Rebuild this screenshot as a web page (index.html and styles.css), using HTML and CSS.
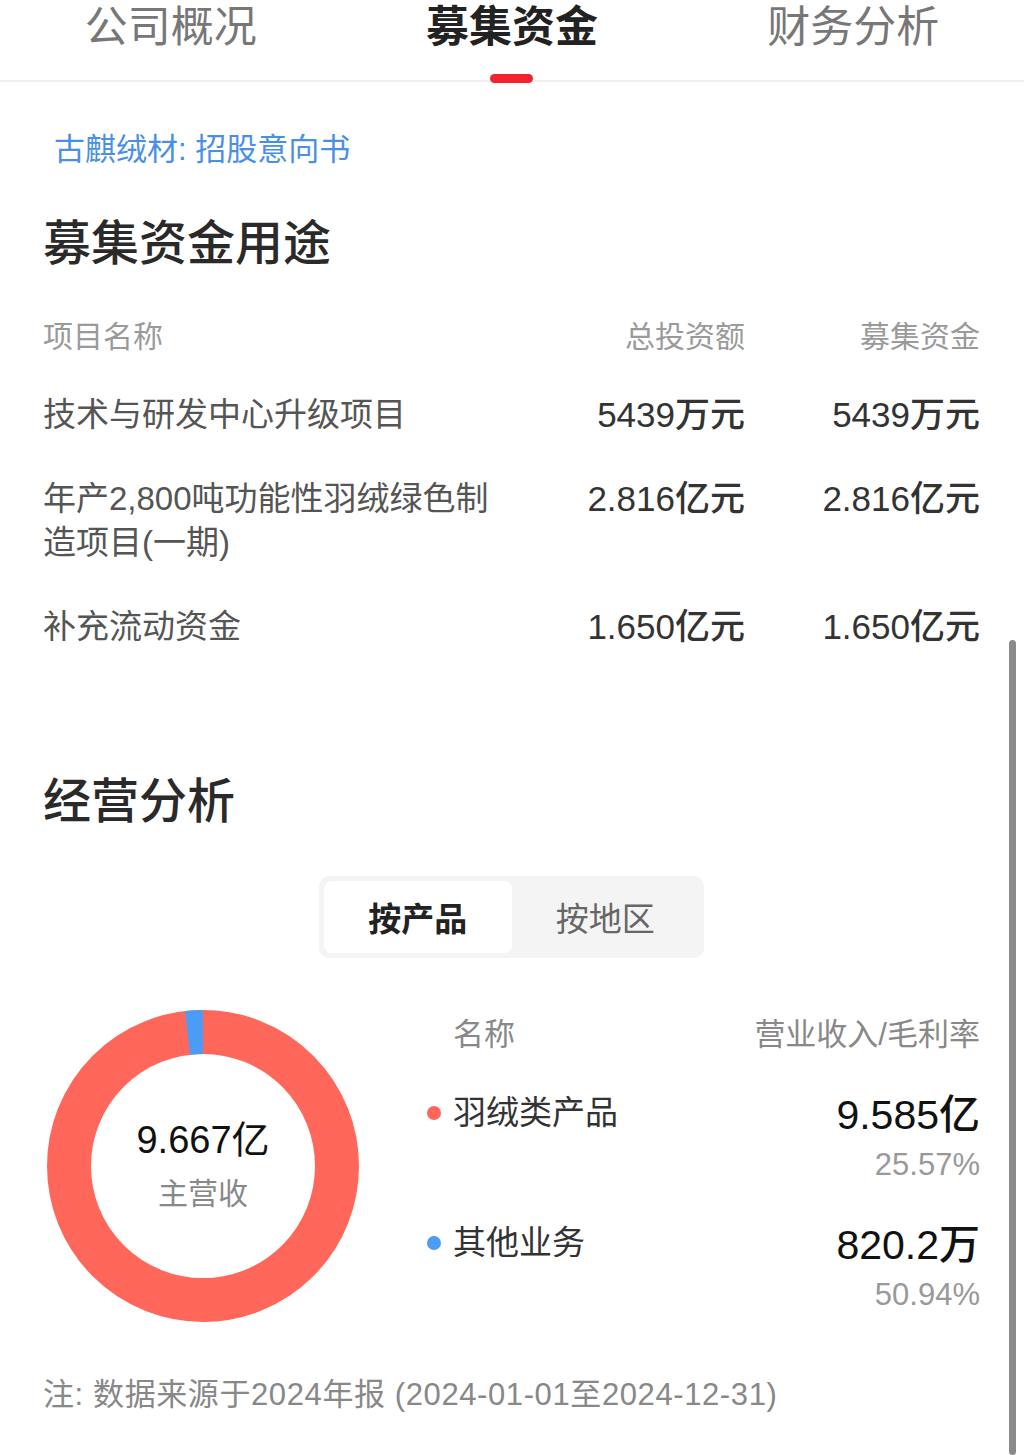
FILE: index.html
```html
<!DOCTYPE html>
<html lang="zh-CN">
  <head>
    <meta charset="UTF-8" />
    <meta name="viewport" content="width=device-width, initial-scale=1.0" />
    <title>募集资金</title>
    <link rel="stylesheet" href="styles.css">
  </head>
  <body>
    <div class="page">
      <nav class="tabs">
        <a class="tab">公司概况</a>
        <a class="tab active">募集资金</a>
        <a class="tab">财务分析</a>
      </nav>

      <div class="content">
        <a class="doc-link">古麒绒材: 招股意向书</a>

        <h2 class="section-title first">募集资金用途</h2>
        <div class="fund-table">
          <div class="fund-row fund-head">
            <span>项目名称</span>
            <span class="num">总投资额</span>
            <span class="num">募集资金</span>
          </div>
          <div class="fund-row">
            <span class="name">技术与研发中心升级项目</span>
            <span class="num val">5439万元</span>
            <span class="num val">5439万元</span>
          </div>
          <div class="fund-row">
            <span class="name">年产2,800吨功能性羽绒绿色制造项目(一期)</span>
            <span class="num val">2.816亿元</span>
            <span class="num val">2.816亿元</span>
          </div>
          <div class="fund-row">
            <span class="name">补充流动资金</span>
            <span class="num val">1.650亿元</span>
            <span class="num val">1.650亿元</span>
          </div>
        </div>

        <h2 class="section-title second">经营分析</h2>
        <div class="segment">
          <button class="seg-btn active">按产品</button>
          <button class="seg-btn">按地区</button>
        </div>

        <div class="biz">
          <div class="donut">
            <svg width="312" height="312" viewBox="0 0 312 312">
              <circle cx="156" cy="156" r="134" fill="none" stroke="#ff675a" stroke-width="44" />
              <circle cx="156" cy="156" r="134" fill="none" stroke="#4b9cf6" stroke-width="44"
                stroke-dasharray="15.5 842" transform="rotate(-96.6 156 156)" />
            </svg>
            <div class="donut-label">
              <span class="donut-val">9.667亿</span>
              <span class="donut-sub">主营收</span>
            </div>
          </div>

          <div class="biz-list">
            <div class="biz-head">
              <span class="biz-head-name">名称</span>
              <span>营业收入/毛利率</span>
            </div>
            <div class="biz-item">
              <span class="biz-name"><i class="dot red"></i>羽绒类产品</span>
              <div class="biz-nums">
                <span class="biz-val">9.585亿</span>
                <span class="biz-pct">25.57%</span>
              </div>
            </div>
            <div class="biz-item">
              <span class="biz-name"><i class="dot blue"></i>其他业务</span>
              <div class="biz-nums">
                <span class="biz-val">820.2万</span>
                <span class="biz-pct">50.94%</span>
              </div>
            </div>
          </div>
        </div>

        <p class="note">注: 数据来源于2024年报 (2024-01-01至2024-12-31)</p>
      </div>

      <div class="scrollbar"></div>
    </div>
  </body>
</html>
```

FILE: styles.css
```css
* {
  margin: 0;
  padding: 0;
  box-sizing: border-box;
}
body {
  font-family: "Liberation Sans", "Noto Sans CJK SC", sans-serif;
  background: #fff;
  color: #333;
}

.page {
  position: relative;
  width: 1024px;
  height: 1455px;
  overflow: hidden;
}

/* top tabs */
.tabs {
  display: flex;
  height: 82px;
  border-bottom: 2px solid #f0f0f0;
}
.tab {
  position: relative;
  flex: 1;
  text-align: center;
  font-size: 43px;
  line-height: 54px;
  color: #777;
}
.tab.active {
  color: #222;
  font-weight: 700;
}
.tab.active::after {
  content: "";
  position: absolute;
  left: 50%;
  bottom: -3px;
  width: 43px;
  height: 9px;
  margin-left: -22px;
  border-radius: 5px;
  background: #f5222d;
}

.content {
  padding: 48px 44px 0 43px;
}

.doc-link {
  display: block;
  padding-left: 11px;
  font-size: 31px;
  line-height: 40px;
  color: #4a8fe6;
}

.section-title {
  font-size: 48px;
  line-height: 60px;
  font-weight: 500;
  color: #2a2a2a;
}
.section-title.first {
  margin-top: 44px;
}
.section-title.second {
  margin-top: 123px;
}

/* fund usage table */
.fund-table {
  margin-top: 41px;
}
.fund-row {
  display: grid;
  grid-template-columns: 465px 1fr 235px;
  font-size: 33px;
  line-height: 44px;
  color: #555;
}
.fund-row + .fund-row {
  margin-top: 40px;
}
.fund-head {
  font-size: 30px;
  color: #9a9a9a;
}
.fund-head + .fund-row {
  margin-top: 34px;
}
.fund-row .num {
  text-align: right;
}
.fund-row .val {
  font-size: 35px;
  font-weight: 500;
  color: #333;
}

/* segmented control */
.segment {
  display: flex;
  width: 385px;
  margin: 44px auto 0;
  padding: 5px;
  border-radius: 10px;
  background: #f4f4f4;
}
.seg-btn {
  flex: 1;
  height: 72px;
  border: none;
  border-radius: 8px;
  background: transparent;
  font-family: inherit;
  font-size: 33px;
  color: #666;
}
.seg-btn.active {
  background: #fff;
  color: #222;
  font-weight: 700;
}

/* business breakdown */
.biz {
  display: flex;
  margin-top: 52px;
}
.donut {
  position: relative;
  width: 312px;
  height: 312px;
  margin-left: 4px;
}
.donut svg {
  display: block;
}
.donut-label {
  position: absolute;
  inset: 0;
  display: flex;
  flex-direction: column;
  align-items: center;
  justify-content: center;
  gap: 12px;
}
.donut-val {
  font-size: 38px;
  line-height: 44px;
  color: #111;
}
.donut-sub {
  font-size: 30px;
  line-height: 40px;
  color: #888;
}

.biz-list {
  flex: 1;
  margin-left: 68px;
  margin-top: 5px;
}
.biz-head {
  display: flex;
  justify-content: space-between;
  font-size: 31px;
  line-height: 40px;
  color: #888;
}
.biz-head-name {
  padding-left: 26px;
}
.biz-item {
  display: flex;
  justify-content: space-between;
  align-items: flex-start;
  margin-top: 38px;
}
.biz-item + .biz-item {
  margin-top: 40px;
}
.biz-name {
  display: flex;
  align-items: center;
  gap: 12px;
  font-size: 33px;
  line-height: 40px;
  color: #333;
}
.dot {
  width: 14px;
  height: 14px;
  border-radius: 50%;
}
.dot.red {
  background: #ff675a;
}
.dot.blue {
  background: #4b9cf6;
}
.biz-nums {
  display: flex;
  flex-direction: column;
  align-items: flex-end;
}
.biz-val {
  font-size: 41px;
  line-height: 44px;
  font-weight: 500;
  color: #111;
}
.biz-pct {
  margin-top: 10px;
  font-size: 31px;
  line-height: 36px;
  color: #999;
}

.note {
  margin-top: 53px;
  font-size: 31px;
  line-height: 40px;
  letter-spacing: 0.6px;
  color: #888;
}

.scrollbar {
  position: absolute;
  right: 8px;
  top: 640px;
  bottom: 0;
  width: 7px;
  border-radius: 4px;
  background: #8a8a8a;
}
```
